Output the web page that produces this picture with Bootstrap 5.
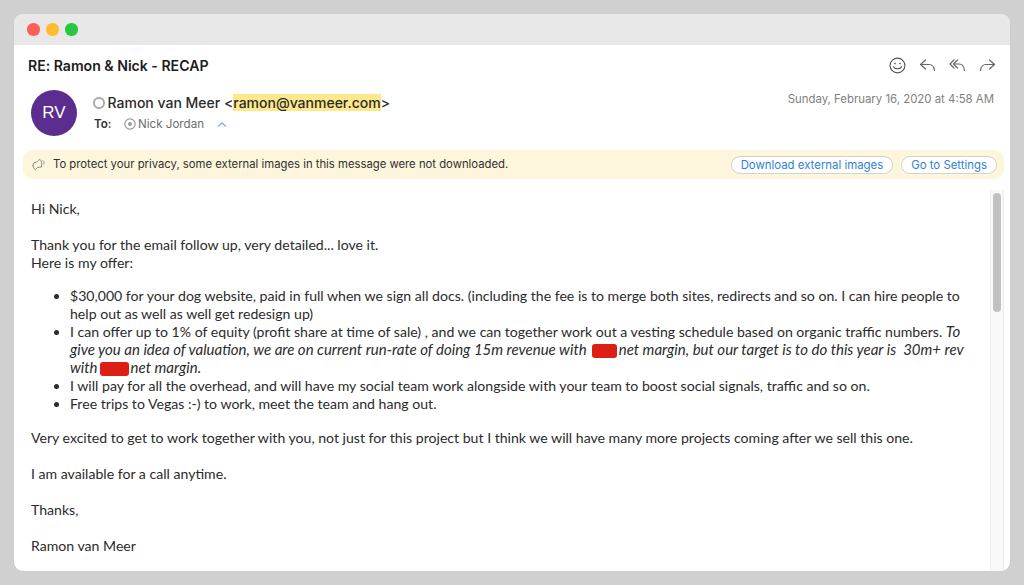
<!DOCTYPE html>
<html lang="en">
<head>
<meta charset="utf-8">
<title>RE: Ramon & Nick - RECAP</title>
<link href="https://cdn.jsdelivr.net/npm/bootstrap@5.3.0/dist/css/bootstrap.min.css" rel="stylesheet">
<style>
html,body{height:100%;margin:0}
body{background:#d0d0d0;padding:14px;overflow:hidden;font-family:Inter,"Liberation Sans",sans-serif;color:#262626}
.mail-win{height:557px;background:#fff;border-radius:9px;overflow:hidden;box-shadow:0 0 1px rgba(0,0,0,.1)}
.title-strip{height:31px;background:#e8e8e8;padding-left:13px;gap:6.5px;flex:none}
.traffic{width:12.5px;height:12.5px;border-radius:50%}
.subject-row{height:41px;padding:0 14px;flex:none}
.subject{font-size:14.1px;font-weight:600;color:#1c1c1c;letter-spacing:-.01px}
.actions{gap:13px}
.head-row{height:64px;padding:3px 16px 0 17px;flex:none}
.avatar{width:46px;height:46px;background:#5b2d8e;color:#fff;font-size:17px;margin-top:1px;font-family:"Liberation Sans",sans-serif;flex:none}
.sender-wrap{margin-left:16px;margin-top:5px}
.sender{font-size:14px;font-weight:500;line-height:18px;color:#2a2a2a}
.dot-ring{width:11.5px;height:11.5px;border:2px solid #a8a8a8;border-radius:50%;margin-right:3px}
.addr-mark{background:#fde98b}
.to-row{font-size:11.6px;line-height:16px;margin-top:4px;color:#6d6d6d}
.to-label{font-weight:600;color:#333;width:26px;margin-left:1px}
.chip-x{margin-right:2px}
.chev{margin-left:13px}
.stamp{font-size:11.4px;color:#808080;margin-top:2px}
.privacy{height:29px;margin:0 6px 0 9px;background:#fdf6dc;border-radius:9px;padding:0 7px 0 8px;font-size:11.3px;color:#303030;flex:none}
.privacy-txt{margin-left:7px}
.pill{line-height:14px;padding:1px 9px;height:18px;color:#2f7fd6;background:#fff;border:1px solid #d3d3d3;border-radius:9px;white-space:nowrap;font-size:11.4px}
.pill-gap{gap:8px}
.main-pane{min-height:0;margin-top:11px}
.letter{padding:10px 0 0 17px;font-family:Lato,"Open Sans",sans-serif;font-size:14.1px;line-height:18px;color:#2b2b2b;white-space:nowrap}
.letter p{margin:0 0 18px}
.letter .lead-in{margin-bottom:15px}
.letter ul{margin:0 0 16px;padding-left:39px}
.letter em{font-size:15px;line-height:14px}
.redact{display:inline-block;background:#dd1f13;border-radius:3px;height:14px;vertical-align:-3px}
.red-a{width:25px;margin:0 -2px 0 2px}
.red-b{width:29px;margin:0 -2px 0 -1px}
.scroll-rail{width:14px;margin-right:6px;border-left:1px solid #ececec;border-right:1px solid #ececec;background:#f9f9f9;flex:none;padding:3px 2px 0 2px}
.scroll-knob{height:119px;background:#c1c1c1;border-radius:4px;width:8px}
</style>
</head>
<body>
<div class="mail-win d-flex flex-column">
  <div class="title-strip d-flex align-items-center">
    <span class="traffic" style="background:#fe5f57"></span>
    <span class="traffic" style="background:#febc2e"></span>
    <span class="traffic" style="background:#28c840"></span>
  </div>
  <div class="subject-row d-flex align-items-center justify-content-between">
    <div class="subject">RE: Ramon &amp; Nick - RECAP</div>
    <div class="actions d-flex align-items-center">
      <svg width="17" height="17" viewBox="0 0 17 17" fill="none" stroke="#555" stroke-width="1.1" stroke-linecap="round"><circle cx="8.5" cy="8.5" r="7.4"/><circle cx="6" cy="6.6" r=".8" fill="#555" stroke="none"/><circle cx="11" cy="6.6" r=".8" fill="#555" stroke="none"/><path d="M4.6 9.8c1 2.6 6.800 2.600 7.800 0"/></svg>
      <svg width="17" height="15" viewBox="0 0 17 15" fill="none" stroke="#666" stroke-width="1.2" stroke-linecap="round" stroke-linejoin="round"><path d="M6.500 2 1.500 6.500 6.500 11"/><path d="M1.500 6.500H10c3 0 5 2 5.500 6"/></svg>
      <svg width="17" height="15" viewBox="0 0 17 15" fill="none" stroke="#666" stroke-width="1.2" stroke-linecap="round" stroke-linejoin="round"><path d="M5 2 1 6l4 4"/><path d="M8.500 2 4.500 6l4 4"/><path d="M4.500 6H10c3 0 5 2 5.500 6.500"/></svg>
      <svg width="17" height="15" viewBox="0 0 17 15" fill="none" stroke="#666" stroke-width="1.2" stroke-linecap="round" stroke-linejoin="round"><path d="M10.500 2l5 4.500-5 4.500"/><path d="M15.500 6.500H7c-3 0-5 2-5.500 6"/></svg>
    </div>
  </div>
  <div class="head-row d-flex justify-content-between align-items-start">
    <div class="d-flex">
      <div class="avatar rounded-circle d-flex align-items-center justify-content-center">RV</div>
      <div class="sender-wrap">
        <div class="sender d-flex align-items-center"><span class="dot-ring d-inline-block"></span><span>Ramon van Meer &lt;<span class="addr-mark">ramon@vanmeer.com</span>&gt;</span></div>
        <div class="to-row d-flex align-items-center">
          <span class="to-label">To:</span>
          <svg class="chip-x ms-1" width="12" height="12" viewBox="0 0 12 12" fill="none" stroke="#9a9a9a"><circle cx="6" cy="6" r="5.200" stroke-width="1.200"/><circle cx="6" cy="6" r="2" fill="#9a9a9a" stroke="none"/></svg>
          <span>Nick Jordan</span>
          <svg class="chev" width="10" height="7" viewBox="0 0 10 7" fill="none" stroke="#7fb2e5" stroke-width="1.500" stroke-linecap="round" stroke-linejoin="round"><path d="M1.500 5 5 2l3.500 3"/></svg>
        </div>
      </div>
    </div>
    <div class="stamp">Sunday, February 16, 2020 at 4:58 AM</div>
  </div>
  <div class="privacy d-flex align-items-center justify-content-between">
    <div class="d-flex align-items-center">
      <svg width="15" height="14" viewBox="0 0 15 14" fill="none" stroke="#8c8c80" stroke-width="1"><path d="M2 7.500a3.500 3.500 0 0 1 3.500-3.500c1 0 1.500-2 3.500-2.500 1.500 1 2 4.500 1.500 7.500-1.500.5-3 0-4 .5-.8.4-1 1.800-2 2-1.500 0-2.500-2.500-2.500-4.500z"/><path d="M12 2.500c1 1 1.300 2.500.8 4"/></svg>
      <span class="privacy-txt">To protect your privacy, some external images in this message were not downloaded.</span>
    </div>
    <div class="pill-gap d-flex">
      <span class="pill">Download external images</span>
      <span class="pill">Go to Settings</span>
    </div>
  </div>
  <div class="main-pane d-flex flex-grow-1">
    <div class="letter flex-grow-1">
      <p>Hi Nick,</p>
      <p class="lead-in">Thank you for the email follow up, very detailed... love it.<br>Here is my offer:</p>
      <ul>
        <li>$30,000 for your dog website, paid in full when we sign all docs. (including the fee is to merge both sites, redirects and so on. I can hire people to<br>help out as well as well get redesign up)</li>
        <li>I can offer up to 1% of equity (profit share at time of sale) , and we can together work out a vesting schedule based on organic traffic numbers. <em>To<br>give you an idea of valuation, we are on current run-rate of doing 15m revenue with <span class="redact red-a"></span> net margin, but our target is to do this year is &nbsp;30m+ rev<br>with <span class="redact red-b"></span> net margin.</em></li>
        <li>I will pay for all the overhead, and will have my social team work alongside with your team to boost social signals, traffic and so on.</li>
        <li>Free trips to Vegas :-) to work, meet the team and hang out.</li>
      </ul>
      <p>Very excited to get to work together with you, not just for this project but I think we will have many more projects coming after we sell this one.</p>
      <p>I am available for a call anytime.</p>
      <p>Thanks,</p>
      <p>Ramon van Meer</p>
    </div>
    <div class="scroll-rail"><div class="scroll-knob"></div></div>
  </div>
</div>
<script src="https://cdn.jsdelivr.net/npm/bootstrap@5.3.0/dist/js/bootstrap.bundle.min.js"></script>
</body>
</html>
